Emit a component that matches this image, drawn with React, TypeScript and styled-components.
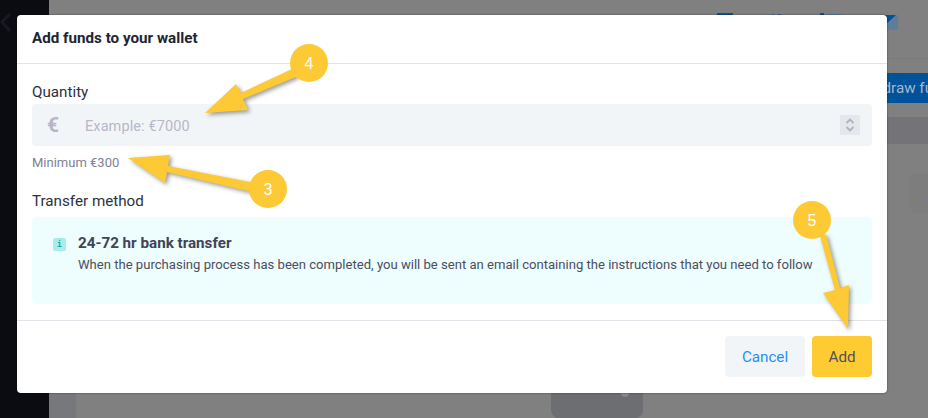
import React from "react";
import styled, { createGlobalStyle } from "styled-components";

const Global = createGlobalStyle`
  html, body { margin: 0; padding: 0; width: 928px; height: 418px; overflow: hidden; background: #808080; }
  * { box-sizing: border-box; }
`;

const Page = styled.div`
  position: relative;
  width: 928px;
  height: 418px;
  display: flex;
  overflow: hidden;
  font-family: Roboto, "Liberation Sans", sans-serif;
  background: #808080;
`;

const Sidebar = styled.aside`
  width: 49px;
  flex: none;
  background: #0b0c11;
  padding-top: 12px;
`;

const Main = styled.main`
  flex: 1;
  display: flex;
  flex-direction: column;
  align-items: stretch;
  background: #808080;
`;

const TopIcons = styled.div`
  height: 59px;
  display: flex;
  justify-content: flex-end;
  align-items: flex-start;
  padding: 12px 30px 0 0;
  border-bottom: 1px solid #7a7a7a;
`;

const ActionRow = styled.div`
  display: flex;
  justify-content: flex-end;
  margin-top: 14px;
`;

const WithdrawButton = styled.div`
  width: 88px;
  height: 30px;
  background: #00529b;
  color: #a3b8cf;
  border-radius: 3px 0 0 3px;
  font-size: 15.2px;
  line-height: 30px;
  padding-left: 12px;
  white-space: nowrap;
  overflow: hidden;
`;

const Strip = styled.div`
  height: 27px;
  margin: 14px 0 0 27px;
  background: #737378;
`;

const SideCardRow = styled.div`
  display: flex;
  justify-content: flex-end;
  margin-top: 29px;
`;

const SideCard = styled.div`
  position: relative;
  width: 18px;
  height: 40px;
  background: #7d7d7e;
  border-radius: 6px 0 0 6px;

  &::after {
    content: "";
    position: absolute;
    right: 0;
    top: 24px;
    width: 2px;
    height: 4px;
    background: #6f8296;
  }
`;

const Spacer = styled.div`
  flex: 1;
`;

const BottomRow = styled.div`
  height: 25px;
  flex: none;
  display: flex;
`;

const BottomEdge = styled.div`
  width: 27px;
  background: #77787c;
`;

const BottomCard = styled.div`
  position: relative;
  width: 92px;
  height: 25px;
  margin-left: 475px;
  background: #6d6e72;
  border-radius: 0 0 8px 8px;
  overflow: hidden;

  &::after {
    content: "";
    position: absolute;
    left: 70px;
    top: -4px;
    width: 8px;
    height: 8px;
    border-radius: 50%;
    background: #87878a;
  }
`;

const Modal = styled.section`
  position: absolute;
  left: 17px;
  top: 15px;
  width: 870px;
  height: 378px;
  background: #fff;
  border-radius: 4px;
  box-shadow: 0 0 2px rgba(0, 0, 0, 0.55);
  display: flex;
  flex-direction: column;
`;

const ModalHeader = styled.header`
  height: 49px;
  flex: none;
  border-bottom: 1px solid #e2e3e8;
  padding: 15px 15px 0;
  font-size: 15.2px;
  line-height: 17px;
  font-weight: 700;
  color: #212533;
`;

const ModalBody = styled.div`
  flex: 1;
  padding: 20px 15px 0;
  display: flex;
  flex-direction: column;
`;

const FieldLabel = styled.label`
  font-size: 15.2px;
  line-height: 17px;
  color: #2d3140;
  display: block;
`;

const QuantityBox = styled.div`
  margin-top: 3px;
  height: 42px;
  background: #f2f5f8;
  border-radius: 4px;
  display: flex;
  align-items: center;
  padding: 0 12px 0 15px;
`;

const EuroSign = styled.span`
  width: 38px;
  font-size: 21px;
  font-weight: 700;
  color: #b7b5c4;
`;

const Placeholder = styled.span`
  flex: 1;
  padding-top: 2px;
  font-size: 14.5px;
  color: #b9b7c6;
  letter-spacing: 0.1px;
`;

const Stepper = styled.div`
  width: 20px;
  height: 20px;
  background: #e6e6ed;
  display: flex;
  align-items: center;
  justify-content: center;
`;

const Hint = styled.div`
  margin-top: 9px;
  font-size: 13px;
  line-height: 15px;
  color: #7f8094;
`;

const MethodLabel = styled(FieldLabel)`
  margin-top: 23px;
`;

const InfoPanel = styled.div`
  margin-top: 7px;
  height: 87px;
  background: #eefdfd;
  border-radius: 4px;
  display: flex;
  gap: 12px;
  padding: 18px 21px;
`;

const InfoBadge = styled.span`
  flex: none;
  width: 13px;
  height: 13px;
  margin-top: 3px;
  background: #abebe8;
  border-radius: 2px;
  color: #14aca8;
  font-family: "DejaVu Sans Mono", monospace;
  font-size: 8px;
  font-weight: 700;
  line-height: 14px;
  text-align: center;
`;

const InfoText = styled.div`
  display: flex;
  flex-direction: column;
`;

const InfoTitle = styled.strong`
  font-size: 15.2px;
  line-height: 17px;
  font-weight: 700;
  color: #3f4458;
`;

const InfoDescription = styled.span`
  margin-top: 5px;
  font-size: 13.09px;
  line-height: 15px;
  color: #4a4e60;
  white-space: nowrap;
`;

const ModalFooter = styled.footer`
  height: 73px;
  flex: none;
  border-top: 1px solid #e2e3e8;
  display: flex;
  justify-content: flex-end;
  gap: 7px;
  padding: 15px 15px 0;
`;

const FooterButton = styled.button<{ $primary?: boolean }>`
  height: 41px;
  width: ${(p) => (p.$primary ? "60px" : "80px")};
  border: 0;
  border-radius: 4px;
  font-family: inherit;
  font-size: 15.2px;
  background: ${(p) => (p.$primary ? "#ffcb33" : "#f2f5f8")};
  color: ${(p) => (p.$primary ? "#4f5158" : "#1e90f5")};
`;

const Annotations = styled.svg`
  position: absolute;
  inset: 0;
  width: 928px;
  height: 418px;
  pointer-events: none;
`;

const Arrow = styled.polygon`
  fill: #fdc935;
  filter: drop-shadow(2px 2px 2px rgba(0, 0, 0, 0.4));
`;

const Bubble = styled.circle`
  fill: #fdc935;
`;

const BubbleNumber = styled.text`
  fill: #fff;
  font-family: "Liberation Sans", sans-serif;
  font-size: 16px;
  text-anchor: middle;
`;

const marks = [
  { n: "4", cx: 309, cy: 63, points: "205,113 236,84 241,93 292,69 298,76 243,99 248,110" },
  { n: "3", cx: 268, cy: 189, points: "128,158 170,155 168,166 255,183 252,192 167,172 165,183" },
  { n: "5", cx: 812, cy: 220, points: "820,236 835,290 823,293 848,329 849,285 840,288 826,234" },
];

export default function App() {
  return (
    <Page>
      <Global />
      <Sidebar>
        <svg width="12" height="22" viewBox="0 0 12 22" fill="none" stroke="#181923" strokeWidth="3">
          <path d="M10 2 2 10l8 9" />
        </svg>
      </Sidebar>
      <Main>
        <TopIcons>
          <svg width="181" height="18" viewBox="0 0 181 18">
            <rect x="0" y="1" width="16" height="3" fill="#14508a" />
            <rect x="55" y="2" width="2" height="2" fill="#3e6a93" />
            <rect x="61" y="2" width="3" height="2" fill="#3e6a93" />
            <rect x="103" y="1" width="4" height="3" fill="#14508a" />
            <rect x="109" y="2" width="16" height="2" fill="#5f7d9b" />
            <rect x="163" y="3" width="18" height="15" rx="2" fill="#5f7d9b" />
            <path d="M165 3h14l-14 13z" fill="#03509b" />
          </svg>
        </TopIcons>
        <ActionRow>
          <WithdrawButton>Withdraw funds</WithdrawButton>
        </ActionRow>
        <Strip />
        <SideCardRow>
          <SideCard />
        </SideCardRow>
        <Spacer />
        <BottomRow>
          <BottomEdge />
          <BottomCard />
        </BottomRow>
      </Main>
      <Modal>
        <ModalHeader>Add funds to your wallet</ModalHeader>
        <ModalBody>
          <FieldLabel>Quantity</FieldLabel>
          <QuantityBox>
            <EuroSign>€</EuroSign>
            <Placeholder>Example: €7000</Placeholder>
            <Stepper>
              <svg width="12" height="16" viewBox="0 0 12 16" fill="none" stroke="#b3b1c0" strokeWidth="1.8">
                <path d="M2.5 6 6 2.5 9.500 6" />
                <path d="M2.500 10 6 13.500 9.500 10" />
              </svg>
            </Stepper>
          </QuantityBox>
          <Hint>Minimum €300</Hint>
          <MethodLabel>Transfer method</MethodLabel>
          <InfoPanel>
            <InfoBadge>i</InfoBadge>
            <InfoText>
              <InfoTitle>24-72 hr bank transfer</InfoTitle>
              <InfoDescription>
                When the purchasing process has been completed, you will be sent an email containing the instructions that you need to follow
              </InfoDescription>
            </InfoText>
          </InfoPanel>
        </ModalBody>
        <ModalFooter>
          <FooterButton>Cancel</FooterButton>
          <FooterButton $primary>Add</FooterButton>
        </ModalFooter>
      </Modal>
      <Annotations viewBox="0 0 928 418">
        {marks.map((m) => (
          <g key={m.n}>
            <Arrow points={m.points} />
            <Bubble cx={m.cx} cy={m.cy} r={19} />
            <BubbleNumber x={m.cx} y={m.cy + 6}>{m.n}</BubbleNumber>
          </g>
        ))}
      </Annotations>
    </Page>
  );
}
